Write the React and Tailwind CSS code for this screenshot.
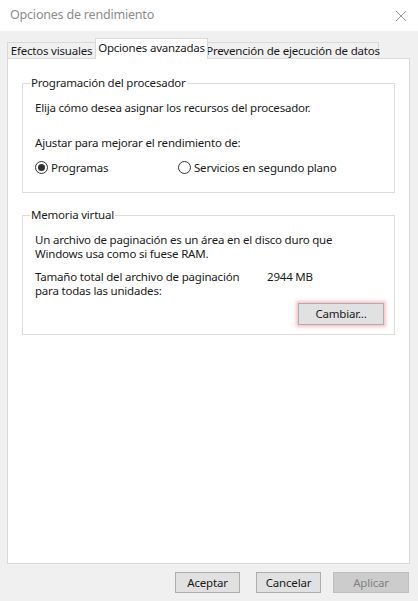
import React from 'react'

const Radio = ({ checked, label }) => (
  <label className='flex items-center gap-[3px]'>
    <span className='w-[13px] h-[13px] rounded-full border border-[#333333] bg-white flex items-center justify-center'>
      {checked && <span className='w-[7px] h-[7px] rounded-full bg-[#333333]'></span>}
    </span>
    <span>{label}</span>
  </label>
)

const Button = ({ children, className = '', disabled }) => (
  <button
    type='button'
    className={
      disabled
        ? 'h-[21px] border border-[#bfbfbf] bg-[#cccccc] text-[#838383] ' + className
        : 'h-[21px] border border-[#adadad] bg-[#e1e1e1] text-[#1a1a1a] ' + className
    }
  >
    {children}
  </button>
)

const App = () => {
  return (
    <div
      className='w-[418px] h-[601px] bg-[#f0f0f0] flex flex-col text-[11.5px] tracking-[-0.2px] text-[#1a1a1a] overflow-hidden'
      style={{ fontFamily: '"Noto Sans", "Open Sans", sans-serif' }}
    >
      {/* Title bar */}
      <div className='h-[31px] bg-white flex items-center justify-between pl-[10px] pr-[11px]'>
        <span className='text-[12.5px] text-[#8c8c8c]'>Opciones de rendimiento</span>
        <svg width='12' height='12' viewBox='0 0 12 12'>
          <path d='M1 1 L11 11 M11 1 L1 11' stroke='#9a9a9a' strokeWidth='1' />
        </svg>
      </div>

      {/* Tabs */}
      <div className='h-[27px] flex items-end pl-[7px] whitespace-nowrap'>
        <div className='h-[16px] w-[89px] border border-b-0 border-[#d9d9d9] bg-[#f0f0f0] flex items-center justify-center leading-none'>
          Efectos visuales
        </div>
        <div className='h-[21px] w-[113px] -ml-px border border-b-0 border-[#d9d9d9] bg-white flex items-center justify-center leading-none -mb-px relative z-10 pb-[3px]'>
          Opciones avanzadas
        </div>
        <div className='h-[16px] w-[172px] -ml-px border border-b-0 border-[#d9d9d9] bg-[#f0f0f0] flex items-center justify-center leading-none'>
          Prevención de ejecución de datos
        </div>
      </div>

      {/* Panel */}
      <div className='ml-[7px] w-[403px] h-[506px] bg-white border border-[#d9d9d9] pt-[16px] px-[14px] flex flex-col'>
        <fieldset className='border border-[#dcdcdc] h-[118px] pl-[12px]'>
          <legend className='-ml-[5px] px-[1px] leading-[16px]'>Programación del procesador</legend>
          <p className='mt-[9px] leading-[15px]'>Elija cómo desea asignar los recursos del procesador.</p>
          <p className='mt-[20px] leading-[15px]'>Ajustar para mejorar el rendimiento de:</p>
          <div className='mt-[10px] flex items-center leading-[15px]'>
            <div className='w-[143px]'>
              <Radio checked label='Programas' />
            </div>
            <Radio label='Servicios en segundo plano' />
          </div>
        </fieldset>

        <fieldset className='mt-[14px] border border-[#dcdcdc] h-[128px] pl-[12px] pr-[10px]'>
          <legend className='-ml-[5px] px-[1px] leading-[16px]'>Memoria virtual</legend>
          <p className='mt-[10px] leading-[14px]'>
            Un archivo de paginación es un área en el disco duro que<br />
            Windows usa como si fuese RAM.
          </p>
          <div className='mt-[9px] flex leading-[14px]'>
            <p className='w-[232px]'>
              Tamaño total del archivo de paginación<br />
              para todas las unidades:
            </p>
            <p>2944 MB</p>
          </div>
          <div className='mt-[5px] flex justify-end'>
            <Button className='w-[86px] h-[22px] shadow-[0_0_3px_2px_rgba(240,120,130,0.45)]'>Cambiar...</Button>
          </div>
        </fieldset>
      </div>

      {/* Bottom buttons */}
      <div className='flex justify-end pr-[9px] mt-[8px]'>
        <Button className='w-[65px]'>Aceptar</Button>
        <Button className='w-[65px] ml-[16px]'>Cancelar</Button>
        <Button disabled className='w-[76px] ml-[12px]'>Aplicar</Button>
      </div>
    </div>
  )
}

export default App
